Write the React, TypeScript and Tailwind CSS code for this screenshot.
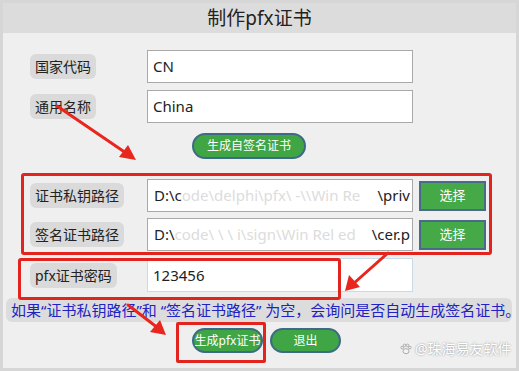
import React from 'react';

const font = { fontFamily: '"Noto Sans", "Noto Sans CJK SC", sans-serif' };

function Label({ text }: { text: string }) {
  return (
    <div className="w-[117px] flex items-center">
      <span className="bg-[#dadada] rounded-md px-[5px] h-[25px] flex items-center text-[14px] text-[#222]">{text}</span>
    </div>
  );
}

function PathValue({ head, mid, tail }: { head: string; mid: string; tail: string }) {
  return (
    <div className="w-[266px] h-[33px] bg-white border border-[#a9a9a9] flex items-center justify-between pl-[6px] pr-[2px] text-[15px] text-[#222] overflow-hidden whitespace-nowrap">
      <span>
        {head}
        <span className="text-[#dcdcdc]">{mid}</span>
      </span>
      <span>{tail}</span>
    </div>
  );
}

function ChooseButton() {
  return (
    <button className="ml-[6px] w-[67px] h-[30px] bg-[#44a946] border-2 border-[#4a6a8a] text-white text-[13px] flex items-center justify-center">
      选择
    </button>
  );
}

export default function App() {
  return (
    <div style={font} className="relative w-[519px] h-[371px] bg-[#d6d6d6] p-[3px] overflow-hidden">
      <div className="h-full bg-[#efefef] flex flex-col rounded-t-sm">
        <div className="h-[30px] bg-[#dcdcdc] flex items-center justify-center text-[19px] text-[#222]">制作pfx证书</div>

        <div className="flex ml-[27px] mt-[17px] h-[33px]">
          <Label text="国家代码" />
          <div className="w-[266px] h-[33px] bg-white border border-[#a9a9a9] flex items-center pl-[5px] text-[15px] text-[#222]">CN</div>
        </div>
        <div className="flex ml-[27px] mt-[7px] h-[33px]">
          <Label text="通用名称" />
          <div className="w-[266px] h-[33px] bg-white border border-[#a9a9a9] flex items-center pl-[5px] text-[15px] text-[#222]">China</div>
        </div>

        <div className="mt-[10px] flex">
          <button className="ml-[189px] w-[114px] h-[26px] rounded-full bg-[#3fa545] border-2 border-[#3d6b85] text-white text-[12px] flex items-center justify-center">
            生成自签名证书
          </button>
        </div>

        <div className="ml-[18px] mt-[14px] w-[471px] h-[82px] border-[3px] border-[#e3231d] rounded-[3px] pt-[3px] pl-[6px] flex flex-col gap-[6px]">
          <div className="flex items-center h-[33px]">
            <Label text="证书私钥路径" />
            <PathValue head="D:\c" mid="ode\delphi\pfx\ -\\Win   Re  " tail="\priv" />
            <ChooseButton />
          </div>
          <div className="flex items-center h-[33px]">
            <Label text="签名证书路径" />
            <PathValue head="D:\" mid="code\ \ \ i\sign\Win  Rel ed" tail="\cer.p" />
            <ChooseButton />
          </div>
        </div>

        <div className="flex ml-[27px] mt-[3px] h-[34px]">
          <Label text="pfx证书密码" />
          <div className="w-[266px] h-[34px] bg-white border border-[#c9dbe9] flex items-center pl-[5px] text-[15px] text-[#222]">123456</div>
        </div>

        <div className="mt-[6px] ml-[3px] mr-[4px] h-[24px] bg-[#dcdcdc] rounded-md flex items-center pl-[5px] text-[15px] text-[#2222c4] whitespace-nowrap">
          如果“证书私钥路径”和 “签名证书路径” 为空，会询问是否自动生成签名证书。
        </div>

        <div className="mt-[6px] flex gap-[7px] ml-[189px]">
          <button className="w-[71px] h-[25px] rounded-full bg-[#3fa545] border-2 border-[#3d6b85] text-white text-[12px] flex items-center justify-center">
            生成pfx证书
          </button>
          <button className="w-[71px] h-[25px] rounded-full bg-[#3fa545] border-2 border-[#3d6b85] text-white text-[12px] flex items-center justify-center">
            退出
          </button>
        </div>
      </div>

      {/* annotation boxes */}
      <div className="absolute left-[18px] top-[258px] w-[323px] h-[42px] border-[3px] border-[#e3231d] rounded-[3px]" />
      <div className="absolute left-[176px] top-[322px] w-[90px] h-[41px] border-[3px] border-[#e3231d] rounded-[2px]" />

      {/* annotation arrows */}
      <svg className="absolute inset-0" width="519" height="371" viewBox="0 0 519 371">
        <g stroke="#e8261e" strokeWidth="3" strokeLinecap="round">
          <line x1="57" y1="106" x2="126" y2="153" />
          <line x1="388" y1="253" x2="353" y2="284" />
          <line x1="128" y1="305" x2="158" y2="328" />
        </g>
        <g fill="#e8261e">
          <polygon points="136,160 119,157 128,145" />
          <polygon points="345,291 349,275 360,287" />
          <polygon points="166,335 150,332 160,320" />
        </g>
      </svg>

      {/* watermark */}
      <div className="absolute left-[400px] top-[338px] flex items-center gap-[3px] text-[14px] text-white [text-shadow:0_0_2px_#888]">
        <svg width="12" height="12" viewBox="0 0 12 12" fill="#f4f4f4" stroke="#9a9a9a" strokeWidth="0.8">
          <ellipse cx="6" cy="8.2" rx="3" ry="2.5" />
          <circle cx="2.2" cy="4.6" r="1.3" />
          <circle cx="4.5" cy="2.4" r="1.3" />
          <circle cx="7.5" cy="2.4" r="1.3" />
          <circle cx="9.8" cy="4.6" r="1.3" />
        </svg>
        <span>@珠海易友软件</span>
      </div>
    </div>
  );
}
